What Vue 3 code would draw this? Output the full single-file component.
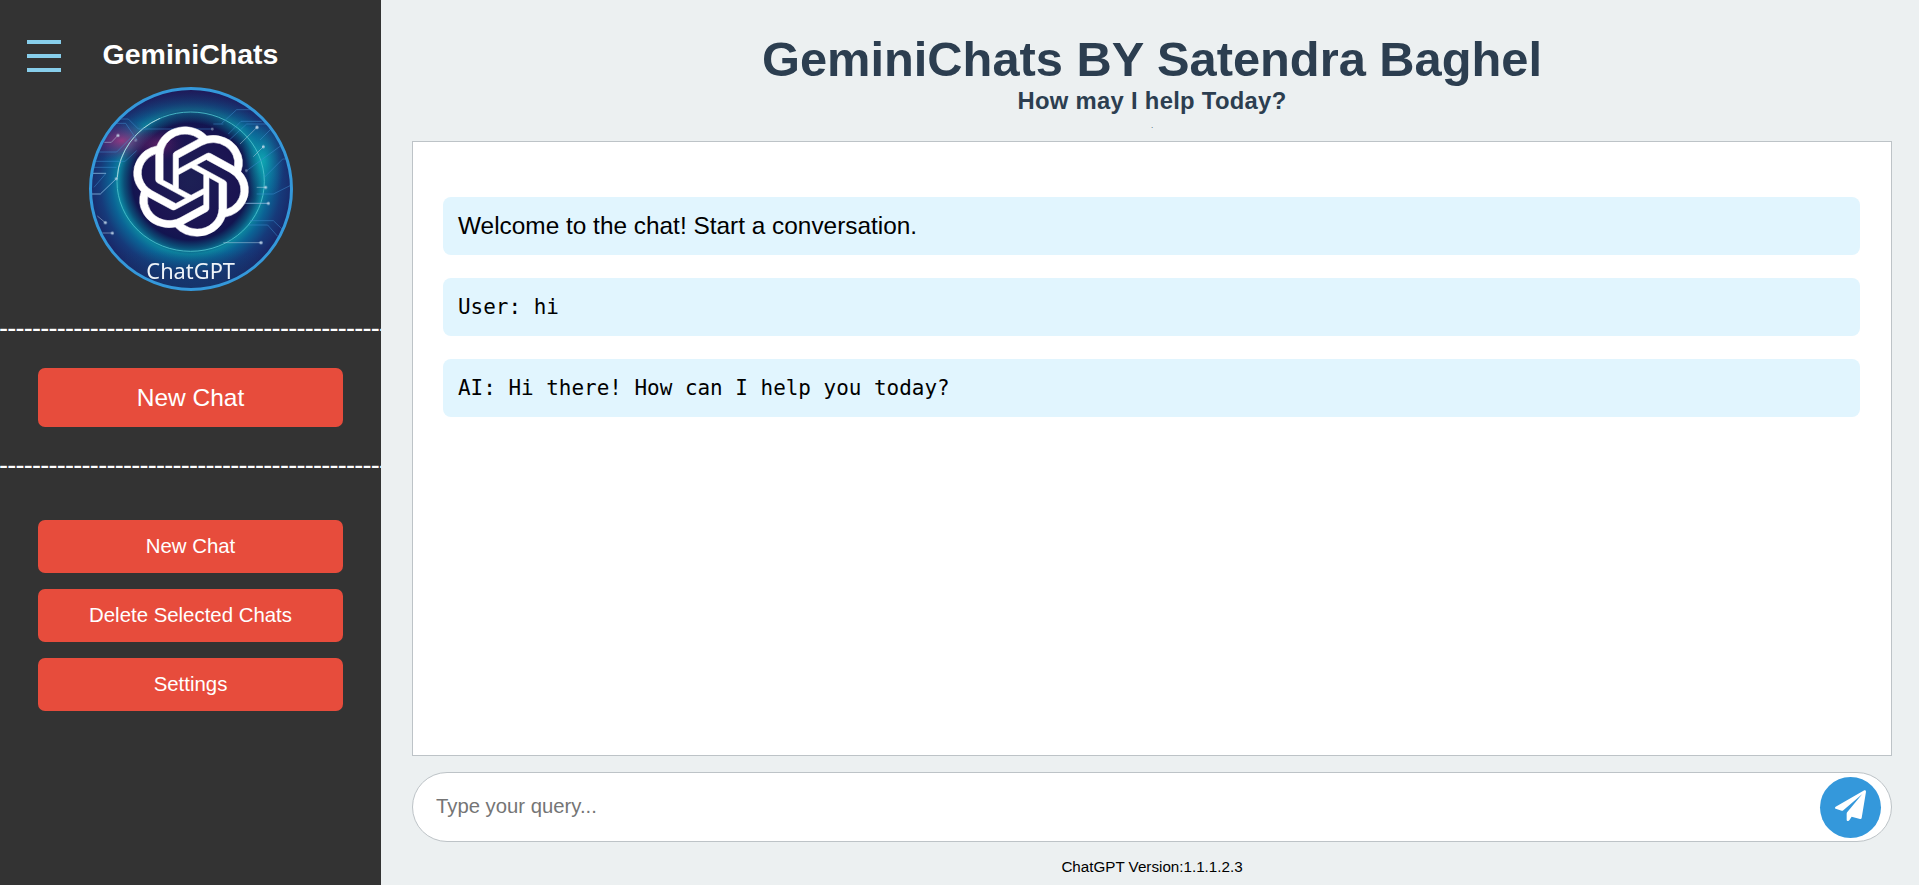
<script setup>
const divider = '-'.repeat(47)
const actions = ['New Chat', 'Delete Selected Chats', 'Settings']
const messages = [
  { text: 'Welcome to the chat! Start a conversation.', mono: false },
  { text: 'User: hi', mono: true },
  { text: 'AI: Hi there! How can I help you today?', mono: true },
]
</script>

<template>
  <div class="layout">
    <aside class="sidebar">
      <button class="menu" aria-label="Menu"><i></i><i></i><i></i></button>
      <h2 class="brand">GeminiChats</h2>
      <svg class="avatar" viewBox="27 19 612 612">
        <defs>
          <clipPath id="disc"><circle cx="333" cy="325" r="298" /></clipPath>
          <radialGradient id="halo" gradientUnits="userSpaceOnUse" cx="332" cy="303" r="350">
            <stop offset="0" stop-color="#1d2055" />
            <stop offset=".4" stop-color="#1b1452" />
            <stop offset=".5" stop-color="#121550" />
            <stop offset=".57" stop-color="#0b4f78" />
            <stop offset=".62" stop-color="#0c839f" />
            <stop offset=".68" stop-color="#0b6395" />
            <stop offset=".78" stop-color="#163a7a" />
            <stop offset=".9" stop-color="#1a2465" />
            <stop offset="1" stop-color="#1b1d5c" />
          </radialGradient>
          <radialGradient id="pink">
            <stop offset="0" stop-color="#a8327f" stop-opacity=".85" />
            <stop offset="1" stop-color="#5a145f" stop-opacity="0" />
          </radialGradient>
          <radialGradient id="teal">
            <stop offset="0" stop-color="#0fb4b8" stop-opacity=".75" />
            <stop offset="1" stop-color="#0a7fa5" stop-opacity="0" />
          </radialGradient>
          <linearGradient id="shade" x1="0" y1="0" x2="0" y2="1">
            <stop offset="0" stop-color="#210f4e" stop-opacity=".8" />
            <stop offset=".2" stop-color="#210f4e" stop-opacity="0" />
            <stop offset=".8" stop-color="#143a6c" stop-opacity="0" />
            <stop offset="1" stop-color="#143a6c" stop-opacity=".8" />
          </linearGradient>
        </defs>
        <g clip-path="url(#disc)">
          <rect x="27" y="19" width="612" height="612" fill="url(#halo)" />
          <ellipse cx="550" cy="240" rx="65" ry="125" fill="url(#teal)" />
          <ellipse cx="125" cy="180" rx="105" ry="62" fill="url(#pink)" />
          <ellipse cx="235" cy="190" rx="80" ry="55" fill="url(#pink)" opacity=".55" />
          <rect x="27" y="19" width="612" height="612" fill="url(#shade)" />
          <ellipse cx="332" cy="303" rx="221" ry="209" fill="none" stroke="#4fc3cf" stroke-width="3" opacity=".85" />
          <path d="M112 290A221 209 0 0 1 240 113" fill="none" stroke="#c9dce6" stroke-width="3" opacity=".75" />
          <g fill="none" stroke="#3f8fd0" stroke-width="2.500" opacity=".6">
            <path d="M95 115h50l30 30h220M105 128h32l34 50M45 214h65l50-50M40 242h95l35-32M40 260h70M425 128l45-41h50M400 130h30M445 160l38-38h62M435 190l65-60h70M540 178l45-45M553 290l55-55h30M500 270l100-73M36 278h42l-36 42M530 340h50l60-30M510 420h70l25 24h30M505 433h58l30 34M500 368h65M36 340h25l48-46" />
          </g>
          <g fill="none" stroke="#b7cfe4" stroke-width="2.500" opacity=".6">
            <path d="M73 185h21l20-21M36 278h42M480 190l51-50M520 228l30-30M430 486h113M495 368h70M52 406l24 20M67 457h30M36 340h25l48-46M530 320h27" />
          </g>
          <g fill="#c7dced" opacity=".85">
            <circle cx="114" cy="164" r="4.500" />
            <circle cx="167" cy="179" r="4" opacity=".5" />
            <circle cx="397" cy="145" r="4" opacity=".6" />
            <circle cx="531" cy="140" r="5" />
            <circle cx="550" cy="198" r="4.500" />
            <circle cx="499" cy="270" r="4" opacity=".5" />
            <circle cx="109" cy="294" r="4" />
            <circle cx="557" cy="320" r="4.500" />
            <circle cx="565" cy="368" r="4.500" />
            <circle cx="76" cy="426" r="4.500" />
            <circle cx="97" cy="457" r="4.500" />
            <circle cx="543" cy="486" r="5" />
          </g>
          <g transform="translate(158.500 138.500) scale(14.550 13.680)">
            <path fill="#fff" stroke="#fff" stroke-width=".12" d="M22.2819 9.8211a5.9847 5.9847 0 0 0-.5157-4.9108 6.0462 6.0462 0 0 0-6.5098-2.9A6.0651 6.0651 0 0 0 4.9807 4.1818a5.9847 5.9847 0 0 0-3.9977 2.9 6.0462 6.0462 0 0 0 .7427 7.0966 5.98 5.98 0 0 0 .511 4.9107 6.051 6.051 0 0 0 6.5146 2.9001A5.9847 5.9847 0 0 0 13.2599 24a6.0557 6.0557 0 0 0 5.7718-4.2058 5.9894 5.9894 0 0 0 3.9977-2.9001 6.0557 6.0557 0 0 0-.7475-7.0729zm-9.022 12.6081a4.4755 4.4755 0 0 1-2.8764-1.0408l.1419-.0804 4.7783-2.7582a.7948.7948 0 0 0 .3927-.6813v-6.7369l2.02 1.1686a.071.071 0 0 1 .038.052v5.5826a4.504 4.504 0 0 1-4.4945 4.4944zm-9.6607-4.1254a4.4708 4.4708 0 0 1-.5346-3.0137l.142.0852 4.783 2.7582a.7712.7712 0 0 0 .7806 0l5.8428-3.3685v2.3324a.0804.0804 0 0 1-.0332.0615L9.74 19.9502a4.4992 4.4992 0 0 1-6.1408-1.6464zM2.3408 7.8956a4.485 4.485 0 0 1 2.3655-1.9728V11.6a.7664.7664 0 0 0 .3879.6765l5.8144 3.3543-2.0201 1.1685a.0757.0757 0 0 1-.071 0l-4.8303-2.7865A4.504 4.504 0 0 1 2.3408 7.872zm16.5963 3.8558L13.1038 8.364 15.1192 7.2a.0757.0757 0 0 1 .071 0l4.8303 2.7913a4.4944 4.4944 0 0 1-.6765 8.1042v-5.6772a.79.79 0 0 0-.407-.667zm2.0107-3.0231l-.142-.0852-4.7735-2.7818a.7759.7759 0 0 0-.7854 0L9.409 9.2297V6.8974a.0662.0662 0 0 1 .0284-.0615l4.8303-2.7866a4.4992 4.4992 0 0 1 6.6802 4.66zM8.3065 12.863l-2.02-1.1638a.0804.0804 0 0 1-.038-.0567V6.0742a4.4992 4.4992 0 0 1 7.3757-3.4537l-.142.0805L8.704 5.459a.7948.7948 0 0 0-.3927.6813zm1.0976-2.3654l2.602-1.4998 2.6069 1.4998v2.9994l-2.5974 1.4997-2.6067-1.4997Z" />
          </g>
          <text class="avatar-text" x="199" y="596" textLength="266" lengthAdjust="spacingAndGlyphs">ChatGPT</text>
        </g>
        <circle cx="333" cy="325" r="301.500" fill="none" stroke="#3498db" stroke-width="9" />
      </svg>
      <div class="divider">{{ divider }}</div>
      <button class="btn btn-large">New Chat</button>
      <div class="divider">{{ divider }}</div>
      <div class="actions">
        <button v-for="a in actions" :key="a" class="btn">{{ a }}</button>
      </div>
    </aside>

    <main class="main">
      <header class="header">
        <h1>GeminiChats BY Satendra Baghel</h1>
        <h3>How may I help Today?</h3>
        <p class="dot">.</p>
      </header>
      <section class="chat">
        <div v-for="m in messages" :key="m.text" class="message" :class="{ mono: m.mono }">{{ m.text }}</div>
      </section>
      <form class="query" @submit.prevent>
        <input type="text" placeholder="Type your query..." />
        <button class="send" aria-label="Send">
          <svg viewBox="60 53 93 93">
            <path fill="#fff" d="M148 54L62 103.500Q58 107 62 109L80 115.500Q83 116 85 114L142 65L97 119Q95 121.500 95 124V143Q96 147 100 146L103 144L110 133L135 140Q139 141 140 137L153 58Q153 53 148 54Z" />
          </svg>
        </button>
      </form>
      <footer class="footer">ChatGPT Version:1.1.1.2.3</footer>
    </main>
  </div>
</template>

<style>
body {
  margin: 0;
  overflow: hidden;
}
</style>

<style scoped>
* {
  box-sizing: border-box;
}
.layout {
  display: flex;
  height: 100vh;
  background: #ecf0f1;
  font-family: "Liberation Sans", Arial, sans-serif;
}
h1, h2, h3, p {
  margin: 0;
}
button {
  border: 0;
  padding: 0;
  font-family: inherit;
}
.sidebar {
  position: relative;
  display: flex;
  flex-direction: column;
  align-items: center;
  width: 381px;
  flex: none;
  padding-top: 34px;
  background: #333;
  color: #fff;
  overflow: hidden;
}
.menu {
  position: absolute;
  left: 27px;
  top: 40px;
  width: 34px;
  height: 32px;
  display: flex;
  flex-direction: column;
  justify-content: space-between;
  background: none;
}
.menu i {
  display: block;
  width: 100%;
  height: 4px;
  background: #87ceeb;
}
.brand {
  font-size: 28.500px;
  line-height: 40px;
}
.avatar {
  display: block;
  flex: none;
  width: 204px;
  height: 204px;
  margin: 12.500px 0 23.500px;
}
.avatar-text {
  font-family: "Noto Sans", "Open Sans", sans-serif;
  font-size: 65px;
  fill: #eef3f8;
}
.divider {
  width: 100%;
  height: 30px;
  line-height: 28px;
  font-size: 27px;
  letter-spacing: -.730px;
  text-indent: -1px;
  white-space: nowrap;
  overflow: hidden;
}
.btn {
  width: 305px;
  height: 53px;
  border-radius: 7px;
  background: #e74c3c;
  color: #fff;
  font-size: 20.400px;
  line-height: 53px;
}
.btn-large {
  height: 59px;
  margin: 24px 0;
  font-size: 24.500px;
  line-height: 59px;
}
.actions {
  display: flex;
  flex-direction: column;
  gap: 16px;
  margin-top: 39px;
}
.main {
  flex: 1;
  min-width: 0;
  display: flex;
  flex-direction: column;
  padding: 31px 27px 0 31px;
}
.header {
  height: 110px;
  text-align: center;
  color: #2c3e50;
}
h1 {
  font-size: 48.800px;
  line-height: 57px;
}
h3 {
  font-size: 23.800px;
  line-height: 26px;
  letter-spacing: .300px;
}
.dot {
  font-size: 8px;
  line-height: 23px;
}
.chat {
  height: 615px;
  padding: 55px 31px 0 30px;
  display: flex;
  flex-direction: column;
  gap: 23px;
  background: #fff;
  border: 1px solid #bdc3c7;
}
.message {
  height: 58px;
  padding: 0 15px;
  border-radius: 8px;
  background: #e1f5fe;
  color: #000;
  font-size: 24.400px;
  line-height: 57px;
}
.mono {
  font-family: "DejaVu Sans Mono", monospace;
  font-size: 20.950px;
  line-height: 59px;
}
.query {
  display: flex;
  align-items: center;
  height: 70px;
  margin-top: 16px;
  padding: 0 10px 0 23px;
  border: 1px solid #bdc3c7;
  border-radius: 35px;
  background: #fff;
}
.query input {
  flex: 1;
  height: 60px;
  padding: 0 0 2px;
  border: 0;
  outline: 0;
  background: none;
  font-family: inherit;
  font-size: 20.300px;
}
.query input::placeholder {
  color: #757575;
}
.send {
  display: flex;
  align-items: center;
  justify-content: center;
  width: 61px;
  height: 61px;
  padding-bottom: 3px;
  border-radius: 50%;
  background: #3498db;
}
.send svg {
  width: 31px;
  height: 31px;
}
.footer {
  margin-top: 15px;
  text-align: center;
  color: #000;
  font-size: 15.200px;
  line-height: 20px;
}
</style>
